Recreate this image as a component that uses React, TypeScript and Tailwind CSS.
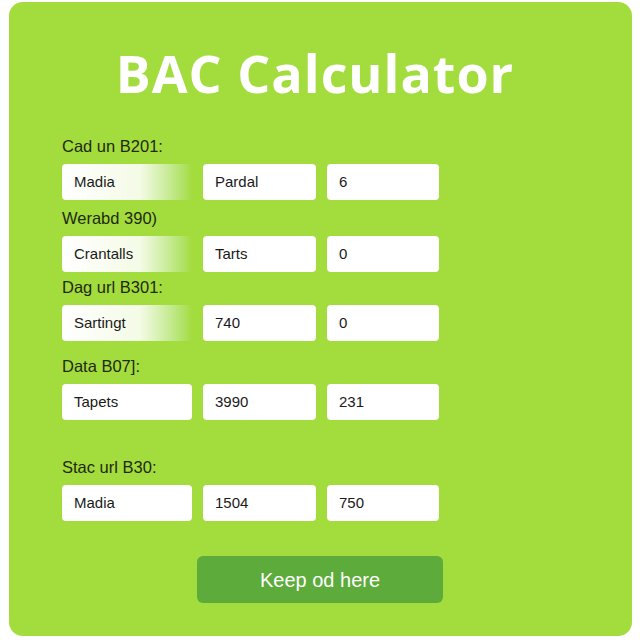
import React from "react";

const rows = [
  { label: "Cad un B201:", cells: ["Madia", "Pardal", "6"], fade: true, gap: "" },
  { label: "Werabd 390)", cells: ["Crantalls", "Tarts", "0"], fade: true, gap: "mt-[9px]" },
  { label: "Dag url B301:", cells: ["Sartingt", "740", "0"], fade: true, gap: "mt-[6px]" },
  { label: "Data B07]:", cells: ["Tapets", "3990", "231"], fade: false, gap: "mt-[16px]" },
  { label: "Stac url B30:", cells: ["Madia", "1504", "750"], fade: false, gap: "mt-[38px]" },
];

const App = () => {
  return (
    <div className="w-[640px] h-[640px] bg-white pt-[2px] pl-[9px]">
      <div className="w-[623px] h-[634px] rounded-[14px] bg-[#a3dc3d] flex flex-col font-['Liberation_Sans',Arial,sans-serif]">
        {/* Title */}
        <h1 className="mt-[41px] ml-[-11px] text-center text-white font-['Open_Sans',sans-serif] font-bold text-[52px] leading-[60px] tracking-[1px]">
          BAC Calculator
        </h1>

        {/* Rows */}
        <div className="ml-[53px] mt-[34px] flex flex-col">
          {rows.map((row, i) => (
            <div key={i} className={row.gap}>
              <p className="text-[16.5px] leading-[18px] text-[#1f2a10] h-[18px]">{row.label}</p>
              <div className="mt-[9px] flex gap-[11px]">
                <div
                  className={
                    row.fade
                      ? "w-[130px] h-[36px] rounded-[4px] bg-gradient-to-r from-white via-[#f4fbe6] via-60% to-[#a3dc3d] flex items-center pl-[12px] text-[15px] text-[#1a1a1a]"
                      : "w-[130px] h-[36px] rounded-[4px] bg-white flex items-center pl-[12px] text-[15px] text-[#1a1a1a]"
                  }
                >
                  {row.cells[0]}
                </div>
                <div className="w-[113px] h-[36px] rounded-[4px] bg-white flex items-center pl-[12px] text-[15px] text-[#1a1a1a]">
                  {row.cells[1]}
                </div>
                <div className="w-[112px] h-[36px] rounded-[4px] bg-white flex items-center pl-[12px] text-[15px] text-[#1a1a1a]">
                  {row.cells[2]}
                </div>
              </div>
            </div>
          ))}
        </div>

        {/* Button */}
        <div className="mt-[35px] ml-[188px]">
          <button className="w-[246px] h-[47px] rounded-[6px] bg-[#5cab3b] text-white text-[20px] font-['Liberation_Sans',Arial,sans-serif]">
            Keep od here
          </button>
        </div>
      </div>
    </div>
  );
};

export default App;
